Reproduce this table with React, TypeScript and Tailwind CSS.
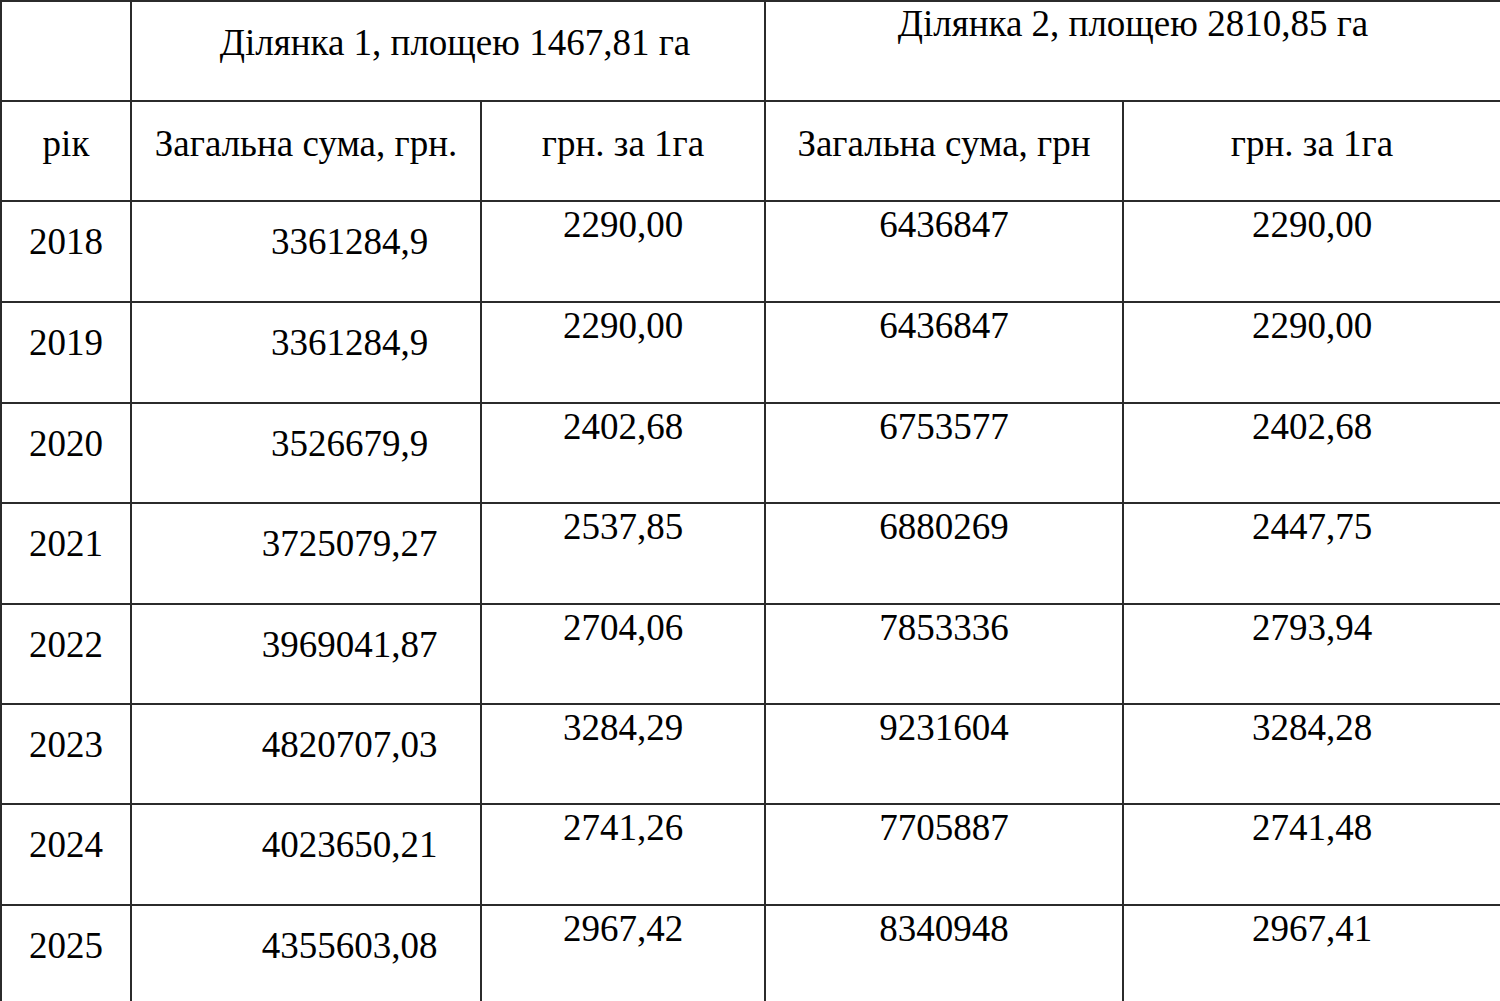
const rows = [
  { year: '2018', total1: '3361284,9', per1: '2290,00', total2: '6436847', per2: '2290,00', h: 'h-[101px]' },
  { year: '2019', total1: '3361284,9', per1: '2290,00', total2: '6436847', per2: '2290,00', h: 'h-[101px]' },
  { year: '2020', total1: '3526679,9', per1: '2402,68', total2: '6753577', per2: '2402,68', h: 'h-[100px]' },
  { year: '2021', total1: '3725079,27', per1: '2537,85', total2: '6880269', per2: '2447,75', h: 'h-[101px]' },
  { year: '2022', total1: '3969041,87', per1: '2704,06', total2: '7853336', per2: '2793,94', h: 'h-[100px]' },
  { year: '2023', total1: '4820707,03', per1: '3284,29', total2: '9231604', per2: '3284,28', h: 'h-[100px]' },
  { year: '2024', total1: '4023650,21', per1: '2741,26', total2: '7705887', per2: '2741,48', h: 'h-[101px]' },
  { year: '2025', total1: '4355603,08', per1: '2967,42', total2: '8340948', per2: '2967,41', h: 'h-[101px]' },
]

const cell = 'border-l-2 border-t-2 border-[#2b2b2b]'

export default function App() {
  return (
    <div className="h-[1001px] w-[1500px] overflow-hidden bg-white font-['Liberation_Serif','Times_New_Roman',serif] text-[37px] text-black">
      <div className="grid grid-cols-[130px_350px_284px_358px_378px]">
        {/* header row 1 */}
        <div className={`${cell} h-[100px]`} />
        <div className={`${cell} col-span-2 h-[100px] pl-[14px] pt-[13px] text-center`}>
          Ділянка 1, площею 1467,81 га
        </div>
        <div className={`${cell} col-span-2 h-[100px] pt-[3px] text-center leading-none`}>
          Ділянка 2, площею 2810,85 га
        </div>

        {/* header row 2 */}
        <div className={`${cell} h-[100px] pt-[14px] text-center`}>рік</div>
        <div className={`${cell} h-[100px] pt-[14px] text-center`}>Загальна сума, грн.</div>
        <div className={`${cell} h-[100px] pt-[14px] text-center`}>грн. за 1га</div>
        <div className={`${cell} h-[100px] pt-[14px] text-center`}>Загальна сума, грн</div>
        <div className={`${cell} h-[100px] pt-[14px] text-center`}>грн. за 1га</div>

        {rows.map((r) => (
          <div key={r.year} className="contents">
            <div className={`${cell} ${r.h} pt-[12px] text-center`}>{r.year}</div>
            <div className={`${cell} ${r.h} pl-[87px] pt-[12px] text-center`}>{r.total1}</div>
            <div className={`${cell} ${r.h} pt-[8px] text-center leading-[30px]`}>{r.per1}</div>
            <div className={`${cell} ${r.h} pt-[8px] text-center leading-[30px]`}>{r.total2}</div>
            <div className={`${cell} ${r.h} pt-[8px] text-center leading-[30px]`}>{r.per2}</div>
          </div>
        ))}
      </div>
    </div>
  )
}
